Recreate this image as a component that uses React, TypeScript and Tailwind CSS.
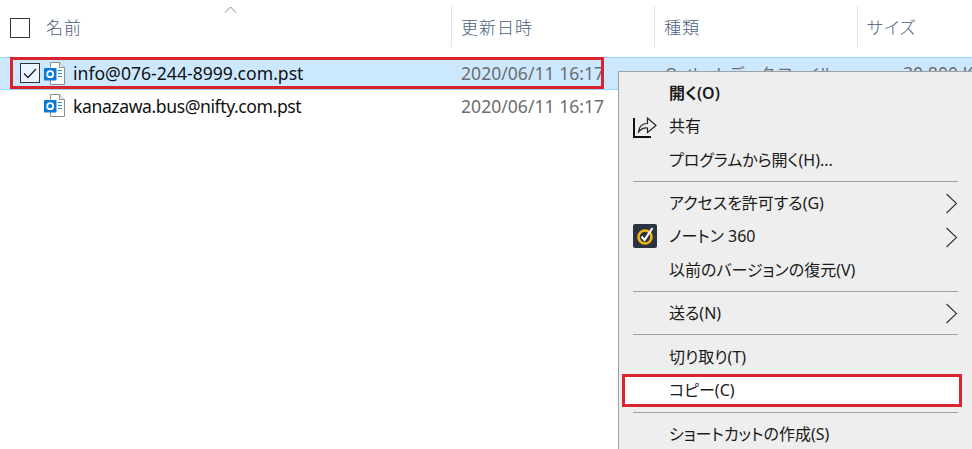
const font = "font-['Noto_Sans','Noto_Sans_CJK_JP',sans-serif] [font-feature-settings:'palt']";

function PstIcon() {
  return (
    <svg width="21" height="23" viewBox="0 0 21 23" className="shrink-0">
      <path d="M6.500 5.500V.5h9l5 5v17h-14v-5" fill="#fff" stroke="#8f8f8f" />
      <path d="M15.500.5v5h5" fill="#eee" stroke="#8f8f8f" />
      <path d="M14 8.500h4M14 11.500h4M14 14.500h4" stroke="#2f8ed8" />
      <rect x="0" y="6" width="12.500" height="12.500" rx="1" fill="#0a78d4" />
      <circle cx="6.200" cy="12.200" r="3" fill="none" stroke="#fff" strokeWidth="1.800" />
    </svg>
  );
}

function Chevron() {
  return (
    <svg width="13" height="21" viewBox="0 0 13 21" className="absolute right-[14px] top-[7px]">
      <path d="M1.500 1l10 9.500-10 9.500" fill="none" stroke="#333" strokeWidth="1.100" />
    </svg>
  );
}

function ShareIcon() {
  return (
    <svg width="24" height="23" viewBox="0 0 24 23">
      <path d="M1 3v19h17" fill="none" stroke="#111" strokeWidth="2" />
      <path
        d="M5.500 17c.5-5 3.500-8.500 9-8.500V3l8.500 7.500-8.500 7v-4.500c-3.500-.5-6.500 1-9 4z"
        fill="#eee"
        stroke="#222"
        strokeWidth="1.200"
      />
    </svg>
  );
}

function NortonIcon() {
  return (
    <svg width="24" height="24" viewBox="0 0 24 24">
      <rect width="24" height="24" rx="2" fill="#2a3440" />
      <circle cx="12" cy="13" r="6.500" fill="none" stroke="#f2b415" strokeWidth="2.600" />
      <path d="M8.500 12.500l3 3.500 8-12" fill="none" stroke="#fff" strokeWidth="2.200" />
    </svg>
  );
}

function Item({
  label,
  bold,
  icon,
  more,
}: {
  label: string;
  bold?: boolean;
  icon?: React.ReactNode;
  more?: boolean;
}) {
  return (
    <div className={`relative flex h-[33.5px] items-center pl-[14px] text-[16px] text-[#1a1a1a] ${bold ? "font-semibold" : ""}`}>
      <span className="flex w-[36px] shrink-0">{icon}</span>
      <span>{label}</span>
      {more ? <Chevron /> : null}
    </div>
  );
}

function Separator({ tall }: { tall?: boolean }) {
  return (
    <div className={`flex items-center px-[14px] ${tall ? "h-[10.5px]" : "h-[9.5px]"}`}>
      <div className="h-px w-full bg-[#a0a0a0]" />
    </div>
  );
}

function Row({ name, selected }: { name: string; selected?: boolean }) {
  return (
    <div
      className={`grid grid-cols-[451px_203px_203px_115px] items-center text-[17.6px] ${
        selected ? "h-[33px] border-y border-[#99d1ff] bg-[#cce8ff]" : "h-[32px]"
      }`}
    >
      <div className="flex items-center pl-[20px]">
        <div className="flex w-[24px] shrink-0">
          {selected ? (
            <div className="flex h-[20px] w-[20px] items-center justify-center border border-[#333] bg-[#e8f4ff]">
              <svg width="14" height="11" viewBox="0 0 14 11">
                <path d="M1 5.500l4 4 8-8.500" fill="none" stroke="#222" strokeWidth="1.300" />
              </svg>
            </div>
          ) : null}
        </div>
        <PstIcon />
        <span className={`ml-[8px] whitespace-nowrap text-[#111] ${selected ? "" : "tracking-[-0.42px]"}`}>{name}</span>
      </div>
      <div className="pl-[10px] whitespace-nowrap text-[#6d6d6d]">2020/06/11 16:17</div>
      <div className="pl-[11px] whitespace-nowrap text-[16px] text-[#6d6d6d]">Outlook データ ファイル</div>
      <div className="pl-[46px] whitespace-nowrap text-[#6d6d6d]">30,800 KB</div>
    </div>
  );
}

export default function App() {
  return (
    <div className={`relative h-[449px] w-[972px] overflow-hidden bg-white ${font}`}>
      {/* sort caret */}
      <svg width="13" height="7" viewBox="0 0 13 7" className="absolute left-[224px] top-[6px]">
        <path d="M1 6.500l5.500-5.500 5.500 5.500" fill="none" stroke="#888" />
      </svg>

      {/* column headers */}
      <div className="grid h-[57px] grid-cols-[451px_203px_203px_115px] items-start pt-[6px] text-[17px] font-light text-[#4c607a]">
        <div className="flex h-[41px] items-center gap-[16px] pl-[10px] pt-[3px]">
          <div className="h-[20px] w-[20px] border border-[#333]" />
          <span className="tracking-[1px]">名前</span>
        </div>
        <div className="flex h-[41px] items-center border-l border-[#e5e5e5] pl-[9px] pt-[3px] tracking-[1px]">更新日時</div>
        <div className="flex h-[41px] items-center border-l border-[#e5e5e5] pl-[9px] pt-[3px] tracking-[1px]">種類</div>
        <div className="flex h-[41px] items-center border-l border-[#e5e5e5] pl-[9px] pt-[3px] tracking-[1px]">サイズ</div>
      </div>

      {/* file rows */}
      <div className="relative">
        <Row name="info@076-244-8999.com.pst" selected />
        <Row name="kanazawa.bus@nifty.com.pst" />
        <div className="absolute left-[10px] top-0 h-[32px] w-[594px] border-[3px] border-[#d9232e]" />
      </div>

      {/* context menu */}
      <div className="absolute bottom-0 left-[618px] right-0 top-[71px] border-l border-t border-[#a0a0a0] bg-[#eeeeee] pt-[4px]">
        <Item label="開く(O)" bold />
        <Item label="共有" icon={<ShareIcon />} />
        <Item label="プログラムから開く(H)..." />
        <Separator />
        <Item label="アクセスを許可する(G)" more />
        <Item label="ノートン 360" icon={<NortonIcon />} more />
        <Item label="以前のバージョンの復元(V)" />
        <Separator />
        <Item label="送る(N)" more />
        <Separator tall />
        <Item label="切り取り(T)" />
        <div className="relative">
          <div className="absolute inset-y-0 left-[3px] right-[10px] border-[3px] border-[#d9232e] bg-white" />
          <Item label="コピー(C)" />
        </div>
        <Separator tall />
        <Item label="ショートカットの作成(S)" />
      </div>
    </div>
  );
}
